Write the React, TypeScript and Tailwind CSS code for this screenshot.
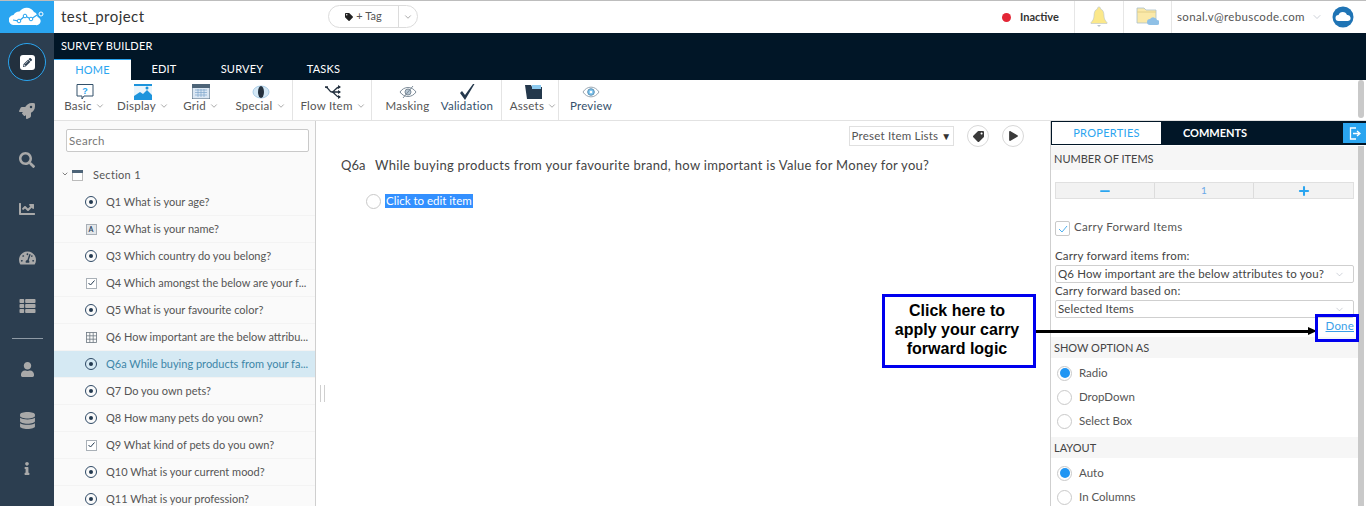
import React from 'react';
import { ChevronDown, Minus, Plus } from 'lucide-react';
import { FaRocket, FaSearch, FaChartLine, FaTachometerAlt, FaThList, FaUser, FaDatabase, FaInfo, FaTag, FaPlay, FaPencilAlt } from 'react-icons/fa';

const Chev = ({ className = '' }: { className?: string }) => <ChevronDown className={`w-[10px] h-[10px] text-[#555] ${className}`} strokeWidth={1.2} />;

const Logo = () => (
  <svg width="36" height="22" viewBox="0 0 36 22">
    <path d="M5 19a5 5 0 0 1-.5-10 6.500 6.500 0 0 1 6-3.500A8.500 8.500 0 0 1 25 6a5.500 5.500 0 0 1 3.500 5 4 4 0 0 1-2 8z" fill="#fff" />
    <path d="M4 14l6 1 6-5 6 3 9-6" fill="none" stroke="#2aa5f0" strokeWidth="1.2" />
    <circle cx="10" cy="15" r="1.800" fill="#fff" stroke="#2aa5f0" />
    <circle cx="16" cy="10" r="1.800" fill="#fff" stroke="#2aa5f0" />
    <circle cx="22" cy="13" r="1.800" fill="#fff" stroke="#2aa5f0" />
    <circle cx="32" cy="8" r="2" fill="#2aa5f0" stroke="#fff" />
  </svg>
);

const Bell = () => (
  <svg width="18" height="22" viewBox="0 0 18 22">
    <path d="M9 1a1.500 1.500 0 0 1 1.500 2C13.500 4 14 7 14 10c0 3 1.500 5 3 6.500v1H1v-1C2.500 15 4 13 4 10c0-3 .5-6 3.500-7A1.500 1.500 0 0 1 9 1z" fill="#fbe88a" stroke="#b9c4cc" strokeWidth=".6" />
    <path d="M7 19h4l-2 2z" fill="#b9c4cc" />
  </svg>
);

const Folder = () => (
  <svg width="23" height="20" viewBox="0 0 23 20">
    <path d="M1 2h7l2 2h10v13H1z" fill="#fbe9a8" stroke="#a9bfcc" strokeWidth=".8" />
    <path d="M1 6h19" stroke="#e2cf88" />
    <path d="M14 19a3 3 0 0 1 0-6 4 4 0 0 1 7 1 2.500 2.500 0 0 1 0 5z" fill="#8fc0e6" />
  </svg>
);

const Avatar = () => (
  <svg width="22" height="22" viewBox="0 0 22 22">
    <circle cx="11" cy="11" r="10.500" fill="#1f74b5" />
    <path d="M6.500 15a3 3 0 0 1 0-6 4.500 4.500 0 0 1 8.500 0 3 3 0 0 1 1 6z" fill="#fff" />
  </svg>
);

const BasicIcon = () => (
  <svg width="18" height="18" viewBox="0 0 18 18">
    <path d="M1 1.500h16v11.500H8l-2 3v-3H1z" fill="#fff" stroke="#33506a" />
    <text x="9" y="10.500" fontSize="9" fontWeight="700" textAnchor="middle" fill="#2aa5f0" fontFamily="Liberation Sans, sans-serif">?</text>
  </svg>
);

const DisplayIcon = () => (
  <svg width="18" height="16" viewBox="0 0 18 16">
    <rect width="18" height="16" fill="#1d94dc" />
    <path d="M0 2h18v9l-5-5-4 4-3-2-6 4z" fill="#e9f4fb" />
    <circle cx="13" cy="4" r="1.500" fill="#1d94dc" />
  </svg>
);

const GridIcon = () => (
  <svg width="18" height="15" viewBox="0 0 18 15">
    <rect width="18" height="15" fill="#dbe7f3" stroke="#4d6478" />
    <rect width="18" height="4" fill="#4d6478" />
    <path d="M3 6h12M3 8.500h12M3 11h12M6 5v8M9 5v8M12 5v8" stroke="#7fa6cc" strokeWidth=".7" />
  </svg>
);

const SpecialIcon = () => (
  <svg width="18" height="14" viewBox="0 0 18 14">
    <ellipse cx="9" cy="7" rx="8" ry="6" fill="#d4e8f6" stroke="#a9cce6" />
    <ellipse cx="9" cy="7" rx="3" ry="6" fill="#24313f" />
  </svg>
);

const FlowIcon = () => (
  <svg width="18" height="14" viewBox="0 0 18 14" fill="none" stroke="#24313f" strokeWidth="1.300">
    <path d="M1 2c4 0 4 5 7 5h8M1 2h3M8 7c3 0 3-5 8-5M8 7c3 0 3 5 8 5" />
    <path d="M14 0l3 2-3 2zM14 5l3 2-3 2zM14 10l3 2-3 2z" fill="#24313f" stroke="none" />
  </svg>
);

const MaskingIcon = () => (
  <svg width="18" height="14" viewBox="0 0 18 14" fill="none" stroke="#7d8b98">
    <path d="M1 7c4-6 12-6 16 0-4 6-12 6-16 0z" />
    <circle cx="9" cy="7" r="3" fill="#b6c6d3" />
    <path d="M4 13L14 1" />
  </svg>
);

const CheckIcon = () => (
  <svg width="16" height="16" viewBox="0 0 16 16">
    <path d="M1 9l2-2 3 4 8-11h1.500L6 16z" fill="#24384c" />
  </svg>
);

const AssetsIcon = () => (
  <svg width="17" height="15" viewBox="0 0 17 15">
    <path d="M0 1h6l1 2h10v12H2z" fill="#24384c" />
    <path d="M7 1h9v4H7z" fill="#8ecbf0" />
  </svg>
);

const PreviewIcon = () => (
  <svg width="18" height="12" viewBox="0 0 18 12" fill="none">
    <path d="M1 6c4-6.500 12-6.500 16 0-4 6.500-12 6.500-16 0z" stroke="#9aa7b2" />
    <circle cx="9" cy="6" r="3.300" fill="#7cc4ee" stroke="#5b90b5" />
    <circle cx="9" cy="6" r="1.300" fill="#fff" />
  </svg>
);

const RadioQ = () => (
  <span className="w-[12px] h-[12px] rounded-full border border-[#2f4a66] flex items-center justify-center">
    <span className="w-[4px] h-[4px] rounded-full bg-[#22384e]" />
  </span>
);
const TextQ = () => (
  <span className="w-[11px] h-[11px] bg-[#e4e7ea] border border-[#a9b0b7] flex items-center justify-center text-[7px] leading-none text-[#2f4a66] font-bold">A</span>
);
const CheckQ = () => (
  <span className="w-[11px] h-[11px] border border-[#a9b0b7] bg-white flex items-center justify-center">
    <svg width="7" height="6" viewBox="0 0 7 6"><path d="M.5 3l2 2L6.500.5" fill="none" stroke="#22384e" /></svg>
  </span>
);
const GridQ = () => (
  <svg width="11" height="11" viewBox="0 0 11 11" fill="none" stroke="#6c7780" strokeWidth=".8">
    <rect x=".5" y=".5" width="10" height="10" />
    <path d="M.5 3.800h10M.5 7.200h10M3.800.5v10M7.200.5v10" />
  </svg>
);

const questions = [
  { t: 'Q1 What is your age?', i: <RadioQ /> },
  { t: 'Q2 What is your name?', i: <TextQ /> },
  { t: 'Q3 Which country do you belong?', i: <RadioQ /> },
  { t: 'Q4 Which amongst the below are your f...', i: <CheckQ /> },
  { t: 'Q5 What is your favourite color?', i: <RadioQ /> },
  { t: 'Q6 How important are the below attribu...', i: <GridQ /> },
  { t: 'Q6a While buying products from your fa...', i: <RadioQ />, active: true },
  { t: 'Q7 Do you own pets?', i: <RadioQ /> },
  { t: 'Q8 How many pets do you own?', i: <RadioQ /> },
  { t: 'Q9 What kind of pets do you own?', i: <CheckQ /> },
  { t: 'Q10 What is your current mood?', i: <RadioQ /> },
  { t: 'Q11 What is your profession?', i: <RadioQ /> },
];

const ribbon = [
  { label: 'Basic', icon: <BasicIcon />, w: 'w-[59px] pl-[2px]', chev: true },
  { label: 'Display', icon: <DisplayIcon />, w: 'w-[58px] pl-[2px]', chev: true },
  { label: 'Grid', icon: <GridIcon />, w: 'w-[58px] pl-[2px]', chev: true },
  { label: 'Special', icon: <SpecialIcon />, w: 'w-[64px] border-r border-[#e4e4e4]', chev: true },
  { label: 'Flow Item', icon: <FlowIcon />, w: 'w-[79px] pl-[2px] border-r border-[#e4e4e4]', chev: true },
  { label: 'Masking', icon: <MaskingIcon />, w: 'w-[66px] pl-[5px]', chev: false },
  { label: 'Validation', icon: <CheckIcon />, w: 'w-[65px] pr-[4px] border-r border-[#e4e4e4] -ml-[1px]', chev: false, dark: true },
  { label: 'Assets', icon: <AssetsIcon />, w: 'w-[57px] pl-[7px] border-r border-[#e4e4e4]', chev: true },
  { label: 'Preview', icon: <PreviewIcon />, w: 'w-[64px]', chev: false, dark: true },
];

const Radio = ({ label, on = false }: { label: string; on?: boolean }) => (
  <div className="flex items-center h-[24px] pl-[6px] gap-[7px]">
    <span className="w-[15px] h-[15px] rounded-full border border-[#c9c9c9] bg-white flex items-center justify-center">
      {on && <span className="w-[10px] h-[10px] rounded-full bg-[#2196f3]" />}
    </span>
    <span className="text-[11.500px] text-[#555]">{label}</span>
  </div>
);

const Select = ({ value }: { value: string }) => (
  <div className="mx-[4px] h-[18px] border border-[#cfcfcf] rounded-[2px] bg-white flex items-center justify-between pl-[2px] pr-[8px] text-[11.500px] tracking-[0.15px] text-[#444]">
    <span>{value}</span>
    <ChevronDown className="w-[11px] h-[11px] text-gray-400" strokeWidth={1} />
  </div>
);

const SectionBand = ({ title, h = 'h-[21px]' }: { title: string; h?: string }) => (
  <div className={`${h} bg-[#f6f6f6] pl-[3px] pt-[2px] flex items-center text-[11px] text-[#444]`}>{title}</div>
);

export default function App() {
  return (
    <div className="relative w-[1366px] h-[506px] overflow-hidden flex bg-white border-t border-[#bdbdbd] font-['Lato',sans-serif]">
      {/* left rail */}
      <aside className="w-[54px] shrink-0 bg-[#2c3e50] flex flex-col items-center text-[#a9a9a9]">
        <div className="w-full h-[32px] shrink-0 bg-[#2aa5f0] flex items-center justify-center"><Logo /></div>
        <div className="mt-[10px] w-[38px] h-[38px] rounded-full border border-[#2aa5f0] bg-[#22303e] flex items-center justify-center">
          <span className="w-[15px] h-[15px] bg-white rounded-[3px] flex items-center justify-center"><FaPencilAlt className="w-[9px] h-[9px] text-[#2c3e50]" /></span>
        </div>
        <FaRocket className="mt-[22px] w-[16px] h-[16px]" />
        <FaSearch className="mt-[33px] w-[16px] h-[16px]" />
        <FaChartLine className="mt-[33px] w-[18px] h-[16px]" />
        <FaTachometerAlt className="mt-[33px] w-[17px] h-[16px]" />
        <FaThList className="mt-[32px] w-[17px] h-[16px]" />
        <div className="mt-[24px] w-[31px] h-px bg-[#8f9aa5]" />
        <FaUser className="mt-[23px] w-[13px] h-[15px]" />
        <FaDatabase className="mt-[35px] w-[15px] h-[17px]" />
        <FaInfo className="mt-[33px] w-[8px] h-[13px]" />
      </aside>

      <div className="flex-1 min-w-0 flex flex-col">
        {/* top bar */}
        <header className="h-[32px] shrink-0 flex items-center pl-[7px]">
          <span className="text-[15px] tracking-[0.45px] text-[#333] w-[268px] -mt-[2px]">test_project</span>
          <div className="-ml-[1px] -mt-[1px] h-[23px] w-[90px] rounded-full border border-[#dcdcdc] flex items-center text-[11px] text-[#555]">
            <span className="w-[70px] flex items-center justify-center gap-[3px] border-r border-[#dcdcdc] h-full"><FaTag className="w-[8px] h-[8px] text-[#222]" />+ Tag</span>
            <Chev className="ml-[4px]" />
          </div>
          <div className="ml-auto flex items-center h-full">
            <span className="w-[9px] h-[9px] rounded-full bg-[#e32636]" />
            <span className="ml-[9px] w-[54px] text-[11px] font-bold text-[#333]">Inactive</span>
            <div className="w-[50px] h-full border-x border-[#e6e6e6] flex items-center justify-center"><Bell /></div>
            <div className="w-[48px] h-full border-r border-[#e6e6e6] flex items-center justify-center pb-[3px]"><Folder /></div>
            <span className="ml-[5px] text-[11.500px] tracking-[0.35px] text-[#555] w-[134px]">sonal.v@rebuscode.com</span>
            <ChevronDown className="w-[12px] h-[12px] text-gray-400" strokeWidth={1} />
            <span className="ml-[9px] mr-[12px] flex"><Avatar /></span>
          </div>
        </header>

        {/* dark banner and tabs */}
        <div className="h-[47px] shrink-0 bg-[#011627] flex flex-col justify-between">
          <div className="pl-[7px] pt-[5px] text-[11px] tracking-[0.15px] text-white">SURVEY BUILDER</div>
          <nav className="flex h-[21px] text-[11px] tracking-[0.2px] text-white">
            <span className="w-[77px] bg-white border-t border-[#2aa5f0] text-[#2aa5f0] flex items-center justify-center">HOME</span>
            <span className="w-[66px] flex items-center justify-center">EDIT</span>
            <span className="w-[90px] flex items-center justify-center">SURVEY</span>
            <span className="w-[73px] flex items-center justify-center">TASKS</span>
          </nav>
        </div>

        {/* ribbon */}
        <div className="relative h-[41px] shrink-0 flex border-b border-[#e2e2e2]">
          {ribbon.map((r) => (
            <div key={r.label} className={`${r.w} h-[40px] flex flex-col items-center justify-between pt-[3px] pb-[8px]`}>
              <span className="h-[17px] flex items-center">{r.icon}</span>
              <span className={`flex items-center gap-[3px] text-[11.500px] leading-[12px] tracking-[0.25px] whitespace-nowrap ${r.dark ? 'text-[#35506b]' : 'text-[#555]'}`}>
                {r.label}{r.chev && <Chev />}
              </span>
            </div>
          ))}
          <div className="ml-auto mr-[2px] w-[6px] h-[38px] rounded-[3px] bg-[#c9c9c9]" />
        </div>

        {/* body */}
        <div className="flex-1 min-h-0 flex">
          <div className="w-[262px] shrink-0 bg-[#fafafa] border-r border-[#cfcfcf] overflow-hidden">
            <div className="pt-[8px] pl-[12px]">
              <div className="w-[243px] h-[23px] border border-[#c9c9c9] rounded-[2px] bg-white pl-[2px] flex items-center text-[11.500px] tracking-[0.3px] text-[#777]">Search</div>
            </div>
            <div className="h-[29px] mt-[8px] pt-[2px] flex items-center pl-[7px] text-[11px] tracking-[0.3px] text-[#555]">
              <ChevronDown className="w-[8px] h-[8px] text-[#444] -mt-[4px]" strokeWidth={2} />
              <svg className="ml-[3px]" width="11" height="11" viewBox="0 0 11 11"><rect x=".5" y=".5" width="10" height="10" fill="#fff" stroke="#bbb" /><rect width="11" height="3" fill="#4d6478" /></svg>
              <span className="ml-[10px]">Section 1</span>
            </div>
            {questions.map((q) => (
              <div key={q.t} className={`h-[27px] flex items-center border-b border-[#f3f3f3] ${q.active ? 'bg-[#d5e9f3] text-[#3d86a8]' : 'text-[#555]'}`}>
                <span className="w-[12px] shrink-0 ml-[31px] flex justify-center">{q.i}</span>
                <span className="ml-[9px] text-[11px] whitespace-nowrap">{q.t}</span>
              </div>
            ))}
          </div>

          {/* canvas */}
          <main className="w-[734px] shrink-0 relative">
            <div className="absolute left-[4px] top-[264px] w-[5px] h-[17px] border-x border-[#cfcfcf]" />
            <div className="flex justify-end items-center h-[27px] pt-[3px] pr-[26px]">
              <div className="h-[20px] w-[105px] border border-[#e0e0e0] flex items-center justify-center gap-[3px] text-[11.500px] tracking-[0.2px] text-[#555]">
                Preset Item Lists <span className="text-[#333] text-[10px]">▼</span>
              </div>
              <span className="ml-[13px] w-[22px] h-[22px] rounded-full border border-[#d8d8d8] flex items-center justify-center"><FaTag className="w-[11px] h-[11px] text-[#3a3a3a] -scale-x-100" /></span>
              <span className="ml-[13px] w-[22px] h-[22px] rounded-full border border-[#d8d8d8] flex items-center justify-center"><FaPlay className="w-[9px] h-[10px] text-[#3a3a3a]" /></span>
            </div>
            <div className="mt-[8px] pl-[25px] flex items-center text-[13px] text-[#444]">
              <span className="w-[34px]">Q6a</span>
              <span className="tracking-[0.3px]">While buying products from your favourite brand, how important is Value for Money for you?</span>
            </div>
            <div className="mt-[18px] pl-[50px] flex items-center">
              <span className="w-[15px] h-[15px] rounded-full border border-[#c9c9c9]" />
              <span className="ml-[4px] h-[14px] px-[1px] bg-[#3390ff] text-white text-[11.500px] leading-[14px]">Click to edit item</span>
            </div>
          </main>

          {/* properties */}
          <div className="flex-1 min-w-0 border-l border-[#cfcfcf] flex flex-col">
            <div className="relative h-[24px] shrink-0 bg-[#011627] flex text-[11px]">
              <span className="w-[111px] bg-white border border-[#011627] text-[#2aa5f0] tracking-[0.3px] flex items-center justify-center">PROPERTIES</span>
              <span className="w-[106px] text-white font-bold flex items-center justify-center">COMMENTS</span>
              <span className="absolute right-0 top-[2px] w-[23px] h-[20px] bg-[#2aa5f0] flex items-center justify-center">
                <svg width="12" height="13" viewBox="0 0 12 13" fill="none" stroke="#fff" strokeWidth="1.300"><path d="M7 1H1.500v11H7" /><path d="M4 6.500h6M8 4l3 2.500L8 9" /></svg>
              </span>
            </div>
            <div className="flex-1 min-h-0 flex pt-px">
              <div className="flex-1 min-w-0">
                <SectionBand title="NUMBER OF ITEMS" h="h-[24px]" />
                <div className="mt-[12px] mx-[4px] h-[17px] bg-[#f2f2f2] border border-[#e0e0e0] grid grid-cols-3 divide-x divide-[#dcdcdc] text-[#2aa5f0]">
                  <span className="flex items-center justify-center"><Minus className="w-[14px] h-[14px]" strokeWidth={3} /></span>
                  <span className="flex items-center justify-center text-[10px] text-[#6aa9e8]">1</span>
                  <span className="flex items-center justify-center"><Plus className="w-[14px] h-[14px]" strokeWidth={3.500} /></span>
                </div>
                <div className="mt-[19px] ml-[4px] flex items-start gap-[4px]">
                  <span className="mt-[3px] w-[15px] h-[15px] border border-[#c9c9c9] rounded-[2px] flex items-center justify-center">
                    <svg width="10" height="8" viewBox="0 0 10 8"><path d="M1 4l3 3 5-6" fill="none" stroke="#4fb0ee" /></svg>
                  </span>
                  <span className="text-[11.500px] tracking-[0.3px] text-[#555]">Carry Forward Items</span>
                </div>
                <div className="mt-[13px] ml-[4px] text-[11.500px] leading-[14px] tracking-[0.18px] text-[#444]">Carry forward items from:</div>
                <div className="mt-[2px]"><Select value="Q6 How important are the below attributes to you?" /></div>
                <div className="ml-[4px] text-[11.500px] leading-[16px] tracking-[0.18px] text-[#444]">Carry forward based on:</div>
                <div className="mt-[1px]"><Select value="Selected Items" /></div>
                <div className="h-[19px] pr-[4px] flex justify-end items-start text-[11.500px] leading-[16px] tracking-[0.2px] text-[#3b9fe8] underline">Done</div>
                <SectionBand title="SHOW OPTION AS" />
                <div className="mt-[3px]">
                  <Radio label="Radio" on />
                  <Radio label="DropDown" />
                  <Radio label="Select Box" />
                </div>
                <div className="mt-[4px]"><SectionBand title="LAYOUT" /></div>
                <div className="mt-[3px]">
                  <Radio label="Auto" on />
                  <Radio label="In Columns" />
                </div>
              </div>
              <div className="w-[8px] shrink-0 bg-white flex justify-start"><span className="w-[6px] h-full bg-[#c9c9c9]" /></div>
            </div>
          </div>
        </div>
      </div>

      {/* annotation */}
      <div className="absolute left-[882px] top-[293px] w-[154px] h-[74px] pb-[3px] pr-[4px] bg-white border-[3px] border-[#0000ee] flex items-center justify-center text-center font-['Liberation_Sans',sans-serif] font-bold text-[16px] leading-[19px] text-black">
        <span>Click here to<br />apply your carry<br />forward logic</span>
      </div>
      <div className="absolute left-[1036px] top-[329px] w-[272px] h-[3px] bg-black" />
      <div className="absolute left-[1308px] top-[326px] w-0 h-0 border-y-[4.500px] border-y-transparent border-l-[9px] border-l-black" />
      <div className="absolute left-[1315px] top-[313px] w-[44px] h-[28px] border-[3px] border-[#0000ee]" />
    </div>
  );
}
